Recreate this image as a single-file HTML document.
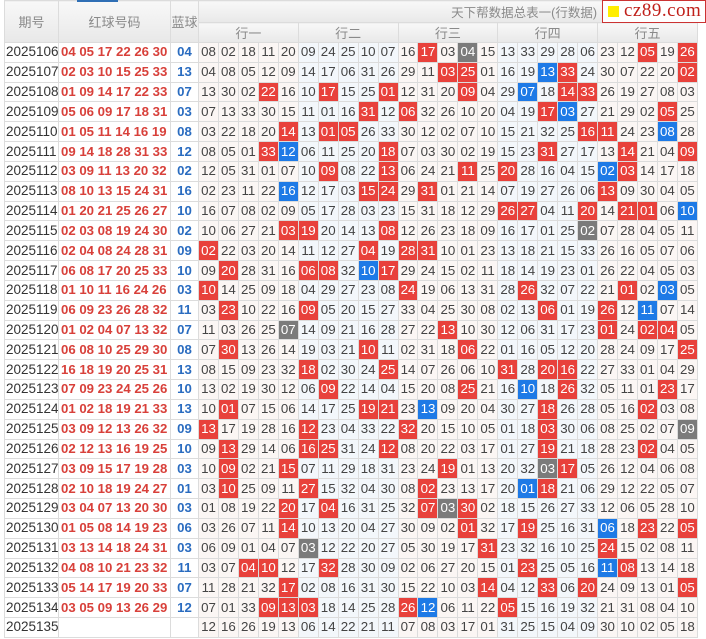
<!DOCTYPE html>
<html><head><meta charset="utf-8">
<style>
html,body{margin:0;padding:0;background:#fff;width:706px;height:639px;overflow:hidden}
body{position:relative;font-family:"Liberation Sans","Noto Sans CJK SC",sans-serif}
table{position:absolute;left:4px;top:0;border-collapse:collapse;table-layout:fixed;width:694px}
td,th{border:1px solid #dcdcdc;padding:0;text-align:center;white-space:nowrap;overflow:hidden}
th{background:linear-gradient(#f8f8f8,#e8e8e8);color:#8a8a8a;font-weight:normal;font-size:13px}
tr.h1 th{height:21px}
tr.h2 th{height:19px}
tbody tr{height:19.83px}
tbody td{font-size:13.3px;color:#444;line-height:18px}
td.q{color:#333;text-align:left;padding-left:1px;background:#fff;font-size:13.5px}
td.rb{color:#d8403a;font-weight:bold;background:#fff;text-align:left;padding-left:2px;font-size:13.2px}
td.bb{color:#2a6cc0;font-weight:bold;background:#fff;font-size:13.2px}
col.w{background:#fbf6f4}
col.c{background:#f3f7fb}
tbody td:nth-child(4),tbody td:nth-child(9),tbody td:nth-child(14),tbody td:nth-child(19),tbody td:nth-child(24){border-left:1px solid #444}
tr.h2 th{border-left:1px solid #999}
td.r{background:#e8413b;color:#fff}
td.b{background:#1e7ae6;color:#fff}
td.g{background:#7b7b7b;color:#fff}
.logo{position:absolute;left:602px;top:0;width:102px;height:21px;border:1px solid #c33;background:#fff;font-family:"Liberation Serif",serif;color:#c0201a;font-size:19px;line-height:21px}
.logo i{position:absolute;left:5px;top:5px;width:11px;height:11px;background:#ffee00}
.logo span{position:absolute;left:21px;top:-1px;letter-spacing:0.5px}
.tab{position:absolute;left:77px;top:0;width:41px;height:2px;background:#2f6fb5}
</style></head><body>
<table>
<colgroup><col style="width:54px"><col style="width:112px"><col style="width:28px">
<col class="w"><col class="w"><col class="w"><col class="w"><col class="w">
<col class="c"><col class="c"><col class="c"><col class="c"><col class="c">
<col class="w"><col class="w"><col class="w"><col class="w"><col class="w">
<col class="c"><col class="c"><col class="c"><col class="c"><col class="c">
<col class="w"><col class="w"><col class="w"><col class="w"><col class="w"></colgroup>
<thead>
<tr class="h1"><th rowspan="2">期号</th><th rowspan="2">红球号码</th><th rowspan="2">蓝球</th><th colspan="25" style="text-align:right;padding-right:100px;font-size:12.5px">天下帮数据总表一(行数据)</th></tr>
<tr class="h2"><th colspan="5">行一</th><th colspan="5">行二</th><th colspan="5">行三</th><th colspan="5">行四</th><th colspan="5">行五</th></tr>
</thead>
<tbody>
<tr><td class="q">2025106</td><td class="rb">04 05 17 22 26 30</td><td class="bb">04</td><td>08</td><td>02</td><td>18</td><td>11</td><td>20</td><td>09</td><td>24</td><td>25</td><td>10</td><td>07</td><td>16</td><td class="r">17</td><td>03</td><td class="g">04</td><td>15</td><td>13</td><td>33</td><td>29</td><td>28</td><td>06</td><td>23</td><td>12</td><td class="r">05</td><td>19</td><td class="r">26</td></tr>
<tr><td class="q">2025107</td><td class="rb">02 03 10 15 25 33</td><td class="bb">13</td><td>04</td><td>08</td><td>05</td><td>12</td><td>09</td><td>14</td><td>17</td><td>06</td><td>31</td><td>26</td><td>29</td><td>11</td><td class="r">03</td><td class="r">25</td><td>01</td><td>16</td><td>19</td><td class="b">13</td><td class="r">33</td><td>24</td><td>30</td><td>07</td><td>22</td><td>20</td><td class="r">02</td></tr>
<tr><td class="q">2025108</td><td class="rb">01 09 14 17 22 33</td><td class="bb">07</td><td>13</td><td>30</td><td>02</td><td class="r">22</td><td>16</td><td>10</td><td class="r">17</td><td>15</td><td>25</td><td class="r">01</td><td>12</td><td>31</td><td>20</td><td class="r">09</td><td>04</td><td>29</td><td class="b">07</td><td>18</td><td class="r">14</td><td class="r">33</td><td>26</td><td>19</td><td>27</td><td>08</td><td>03</td></tr>
<tr><td class="q">2025109</td><td class="rb">05 06 09 17 18 31</td><td class="bb">03</td><td>07</td><td>13</td><td>33</td><td>30</td><td>15</td><td>11</td><td>01</td><td>16</td><td class="r">31</td><td>12</td><td class="r">06</td><td>32</td><td>26</td><td>10</td><td>20</td><td>04</td><td>19</td><td class="r">17</td><td class="b">03</td><td>27</td><td>21</td><td>29</td><td>02</td><td class="r">05</td><td>25</td></tr>
<tr><td class="q">2025110</td><td class="rb">01 05 11 14 16 19</td><td class="bb">08</td><td>03</td><td>22</td><td>18</td><td>20</td><td class="r">14</td><td>13</td><td class="r">01</td><td class="r">05</td><td>26</td><td>33</td><td>30</td><td>12</td><td>02</td><td>07</td><td>10</td><td>15</td><td>21</td><td>32</td><td>25</td><td class="r">16</td><td class="r">11</td><td>24</td><td>23</td><td class="b">08</td><td>28</td></tr>
<tr><td class="q">2025111</td><td class="rb">09 14 18 28 31 33</td><td class="bb">12</td><td>08</td><td>05</td><td>01</td><td class="r">33</td><td class="b">12</td><td>06</td><td>11</td><td>25</td><td>20</td><td class="r">18</td><td>07</td><td>03</td><td>30</td><td>02</td><td>19</td><td>15</td><td>23</td><td class="r">31</td><td>27</td><td>17</td><td>13</td><td class="r">14</td><td>21</td><td>04</td><td class="r">09</td></tr>
<tr><td class="q">2025112</td><td class="rb">03 09 11 13 20 32</td><td class="bb">02</td><td>12</td><td>05</td><td>31</td><td>01</td><td>07</td><td>10</td><td class="r">09</td><td>08</td><td>22</td><td class="r">13</td><td>06</td><td>24</td><td>21</td><td class="r">11</td><td>25</td><td class="r">20</td><td>28</td><td>16</td><td>04</td><td>15</td><td class="b">02</td><td class="r">03</td><td>14</td><td>17</td><td>18</td></tr>
<tr><td class="q">2025113</td><td class="rb">08 10 13 15 24 31</td><td class="bb">16</td><td>02</td><td>23</td><td>11</td><td>22</td><td class="b">16</td><td>12</td><td>17</td><td>03</td><td class="r">15</td><td class="r">24</td><td>29</td><td class="r">31</td><td>01</td><td>21</td><td>14</td><td>07</td><td>19</td><td>27</td><td>26</td><td>06</td><td class="r">13</td><td>09</td><td>30</td><td>04</td><td>05</td></tr>
<tr><td class="q">2025114</td><td class="rb">01 20 21 25 26 27</td><td class="bb">10</td><td>16</td><td>07</td><td>08</td><td>02</td><td>09</td><td>05</td><td>17</td><td>28</td><td>03</td><td>23</td><td>15</td><td>31</td><td>18</td><td>12</td><td>29</td><td class="r">26</td><td class="r">27</td><td>04</td><td>11</td><td class="r">20</td><td>14</td><td class="r">21</td><td class="r">01</td><td>06</td><td class="b">10</td></tr>
<tr><td class="q">2025115</td><td class="rb">02 03 08 19 24 30</td><td class="bb">02</td><td>10</td><td>06</td><td>27</td><td>21</td><td class="r">03</td><td class="r">19</td><td>20</td><td>14</td><td>13</td><td class="r">08</td><td>12</td><td>26</td><td>23</td><td>18</td><td>09</td><td>16</td><td>17</td><td>01</td><td>25</td><td class="g">02</td><td>07</td><td>28</td><td>04</td><td>05</td><td>11</td></tr>
<tr><td class="q">2025116</td><td class="rb">02 04 08 24 28 31</td><td class="bb">09</td><td class="r">02</td><td>22</td><td>03</td><td>20</td><td>14</td><td>11</td><td>12</td><td>27</td><td class="r">04</td><td>19</td><td class="r">28</td><td class="r">31</td><td>10</td><td>01</td><td>23</td><td>13</td><td>18</td><td>21</td><td>15</td><td>33</td><td>26</td><td>16</td><td>05</td><td>07</td><td>06</td></tr>
<tr><td class="q">2025117</td><td class="rb">06 08 17 20 25 33</td><td class="bb">10</td><td>09</td><td class="r">20</td><td>28</td><td>31</td><td>16</td><td class="r">06</td><td class="r">08</td><td>32</td><td class="b">10</td><td class="r">17</td><td>29</td><td>24</td><td>15</td><td>02</td><td>11</td><td>18</td><td>14</td><td>19</td><td>23</td><td>01</td><td>26</td><td>22</td><td>04</td><td>05</td><td>03</td></tr>
<tr><td class="q">2025118</td><td class="rb">01 10 11 16 24 26</td><td class="bb">03</td><td class="r">10</td><td>14</td><td>25</td><td>09</td><td>18</td><td>04</td><td>29</td><td>27</td><td>23</td><td>08</td><td class="r">24</td><td>19</td><td>06</td><td>13</td><td>31</td><td>28</td><td class="r">26</td><td>32</td><td>07</td><td>22</td><td>21</td><td class="r">01</td><td>02</td><td class="b">03</td><td>05</td></tr>
<tr><td class="q">2025119</td><td class="rb">06 09 23 26 28 32</td><td class="bb">11</td><td>03</td><td class="r">23</td><td>10</td><td>22</td><td>16</td><td class="r">09</td><td>05</td><td>20</td><td>15</td><td>27</td><td>33</td><td>04</td><td>25</td><td>30</td><td>08</td><td>02</td><td>13</td><td class="r">06</td><td>01</td><td>19</td><td class="r">26</td><td>12</td><td class="b">11</td><td>07</td><td>14</td></tr>
<tr><td class="q">2025120</td><td class="rb">01 02 04 07 13 32</td><td class="bb">07</td><td>11</td><td>03</td><td>26</td><td>25</td><td class="g">07</td><td>14</td><td>09</td><td>21</td><td>16</td><td>28</td><td>27</td><td>22</td><td class="r">13</td><td>10</td><td>30</td><td>12</td><td>06</td><td>31</td><td>17</td><td>23</td><td class="r">01</td><td>24</td><td class="r">02</td><td class="r">04</td><td>05</td></tr>
<tr><td class="q">2025121</td><td class="rb">06 08 10 25 29 30</td><td class="bb">08</td><td>07</td><td class="r">30</td><td>13</td><td>26</td><td>14</td><td>19</td><td>03</td><td>21</td><td class="r">10</td><td>11</td><td>02</td><td>31</td><td>18</td><td class="r">06</td><td>22</td><td>01</td><td>16</td><td>05</td><td>12</td><td>20</td><td>28</td><td>24</td><td>09</td><td>17</td><td class="r">25</td></tr>
<tr><td class="q">2025122</td><td class="rb">16 18 19 20 25 31</td><td class="bb">13</td><td>08</td><td>15</td><td>09</td><td>23</td><td>32</td><td class="r">18</td><td>02</td><td>30</td><td>24</td><td class="r">25</td><td>14</td><td>07</td><td>26</td><td>06</td><td>10</td><td class="r">31</td><td>28</td><td class="r">20</td><td class="r">16</td><td>22</td><td>27</td><td>33</td><td>01</td><td>04</td><td>29</td></tr>
<tr><td class="q">2025123</td><td class="rb">07 09 23 24 25 26</td><td class="bb">10</td><td>13</td><td>02</td><td>19</td><td>30</td><td>12</td><td>06</td><td class="r">09</td><td>22</td><td>14</td><td>04</td><td>15</td><td>20</td><td>08</td><td class="r">25</td><td>21</td><td>16</td><td class="b">10</td><td>18</td><td class="r">26</td><td>32</td><td>05</td><td>11</td><td>01</td><td class="r">23</td><td>17</td></tr>
<tr><td class="q">2025124</td><td class="rb">01 02 18 19 21 33</td><td class="bb">13</td><td>10</td><td class="r">01</td><td>07</td><td>15</td><td>06</td><td>14</td><td>17</td><td>25</td><td class="r">19</td><td class="r">21</td><td>23</td><td class="b">13</td><td>09</td><td>20</td><td>04</td><td>30</td><td>27</td><td class="r">18</td><td>26</td><td>28</td><td>05</td><td>16</td><td class="r">02</td><td>03</td><td>08</td></tr>
<tr><td class="q">2025125</td><td class="rb">03 09 12 13 26 32</td><td class="bb">09</td><td class="r">13</td><td>17</td><td>19</td><td>28</td><td>16</td><td class="r">12</td><td>23</td><td>04</td><td>33</td><td>22</td><td class="r">32</td><td>20</td><td>15</td><td>10</td><td>05</td><td>01</td><td>18</td><td class="r">03</td><td>30</td><td>06</td><td>08</td><td>25</td><td>02</td><td>07</td><td class="g">09</td></tr>
<tr><td class="q">2025126</td><td class="rb">02 12 13 16 19 25</td><td class="bb">10</td><td>09</td><td class="r">13</td><td>29</td><td>14</td><td>06</td><td class="r">16</td><td class="r">25</td><td>31</td><td>24</td><td class="r">12</td><td>08</td><td>20</td><td>22</td><td>03</td><td>17</td><td>01</td><td>27</td><td class="r">19</td><td>21</td><td>18</td><td>28</td><td>23</td><td class="r">02</td><td>04</td><td>05</td></tr>
<tr><td class="q">2025127</td><td class="rb">03 09 15 17 19 28</td><td class="bb">03</td><td>10</td><td class="r">09</td><td>02</td><td>21</td><td class="r">15</td><td>07</td><td>11</td><td>29</td><td>18</td><td>31</td><td>23</td><td>24</td><td class="r">19</td><td>01</td><td>13</td><td>20</td><td>32</td><td class="g">03</td><td class="r">17</td><td>05</td><td>26</td><td>12</td><td>04</td><td>06</td><td>08</td></tr>
<tr><td class="q">2025128</td><td class="rb">02 10 18 19 24 27</td><td class="bb">01</td><td>03</td><td class="r">10</td><td>25</td><td>09</td><td>11</td><td class="r">27</td><td>15</td><td>32</td><td>04</td><td>30</td><td>08</td><td class="r">02</td><td>23</td><td>13</td><td>17</td><td>20</td><td class="b">01</td><td class="r">18</td><td>21</td><td>06</td><td>29</td><td>12</td><td>22</td><td>05</td><td>07</td></tr>
<tr><td class="q">2025129</td><td class="rb">03 04 07 13 20 30</td><td class="bb">03</td><td>01</td><td>08</td><td>19</td><td>22</td><td class="r">20</td><td>17</td><td class="r">04</td><td>16</td><td>31</td><td>25</td><td>32</td><td class="r">07</td><td class="g">03</td><td class="r">30</td><td>02</td><td>18</td><td>15</td><td>26</td><td>27</td><td>33</td><td>12</td><td>06</td><td>05</td><td>28</td><td>10</td></tr>
<tr><td class="q">2025130</td><td class="rb">01 05 08 14 19 23</td><td class="bb">06</td><td>03</td><td>26</td><td>07</td><td>11</td><td class="r">14</td><td>10</td><td>13</td><td>20</td><td>04</td><td>27</td><td>30</td><td>09</td><td>02</td><td class="r">01</td><td>32</td><td>17</td><td class="r">19</td><td>25</td><td>16</td><td>31</td><td class="b">06</td><td>18</td><td class="r">23</td><td>22</td><td class="r">05</td></tr>
<tr><td class="q">2025131</td><td class="rb">03 13 14 18 24 31</td><td class="bb">03</td><td>06</td><td>09</td><td>01</td><td>04</td><td>07</td><td class="g">03</td><td>12</td><td>22</td><td>20</td><td>27</td><td>05</td><td>30</td><td>19</td><td>17</td><td class="r">31</td><td>23</td><td>32</td><td>16</td><td>10</td><td>25</td><td class="r">24</td><td>15</td><td>02</td><td>08</td><td>11</td></tr>
<tr><td class="q">2025132</td><td class="rb">04 08 10 21 23 32</td><td class="bb">11</td><td>03</td><td>07</td><td class="r">04</td><td class="r">10</td><td>12</td><td>17</td><td class="r">32</td><td>28</td><td>30</td><td>09</td><td>02</td><td>06</td><td>27</td><td>20</td><td>15</td><td>01</td><td class="r">23</td><td>25</td><td>05</td><td>16</td><td class="b">11</td><td class="r">08</td><td>13</td><td>14</td><td>18</td></tr>
<tr><td class="q">2025133</td><td class="rb">05 14 17 19 20 33</td><td class="bb">07</td><td>11</td><td>28</td><td>21</td><td>32</td><td class="r">17</td><td>02</td><td>08</td><td>16</td><td>31</td><td>30</td><td>15</td><td>22</td><td>10</td><td>03</td><td class="r">14</td><td>04</td><td>12</td><td class="r">33</td><td>06</td><td class="r">20</td><td>24</td><td>09</td><td>13</td><td>01</td><td class="r">05</td></tr>
<tr><td class="q">2025134</td><td class="rb">03 05 09 13 26 29</td><td class="bb">12</td><td>07</td><td>01</td><td>33</td><td class="r">09</td><td class="r">13</td><td class="r">03</td><td>18</td><td>14</td><td>25</td><td>28</td><td class="r">26</td><td class="b">12</td><td>06</td><td>11</td><td>22</td><td class="r">05</td><td>15</td><td>16</td><td>19</td><td>32</td><td>21</td><td>31</td><td>08</td><td>04</td><td>10</td></tr>
<tr><td class="q">2025135</td><td class="rb"></td><td class="bb"></td><td>12</td><td>16</td><td>26</td><td>19</td><td>13</td><td>06</td><td>14</td><td>22</td><td>21</td><td>11</td><td>07</td><td>08</td><td>03</td><td>17</td><td>01</td><td>31</td><td>25</td><td>15</td><td>04</td><td>09</td><td>30</td><td>10</td><td>02</td><td>05</td><td>18</td></tr>
</tbody>
</table>
<div class="tab"></div>
<div class="logo"><i></i><span>cz89.com</span></div>
</body></html>
